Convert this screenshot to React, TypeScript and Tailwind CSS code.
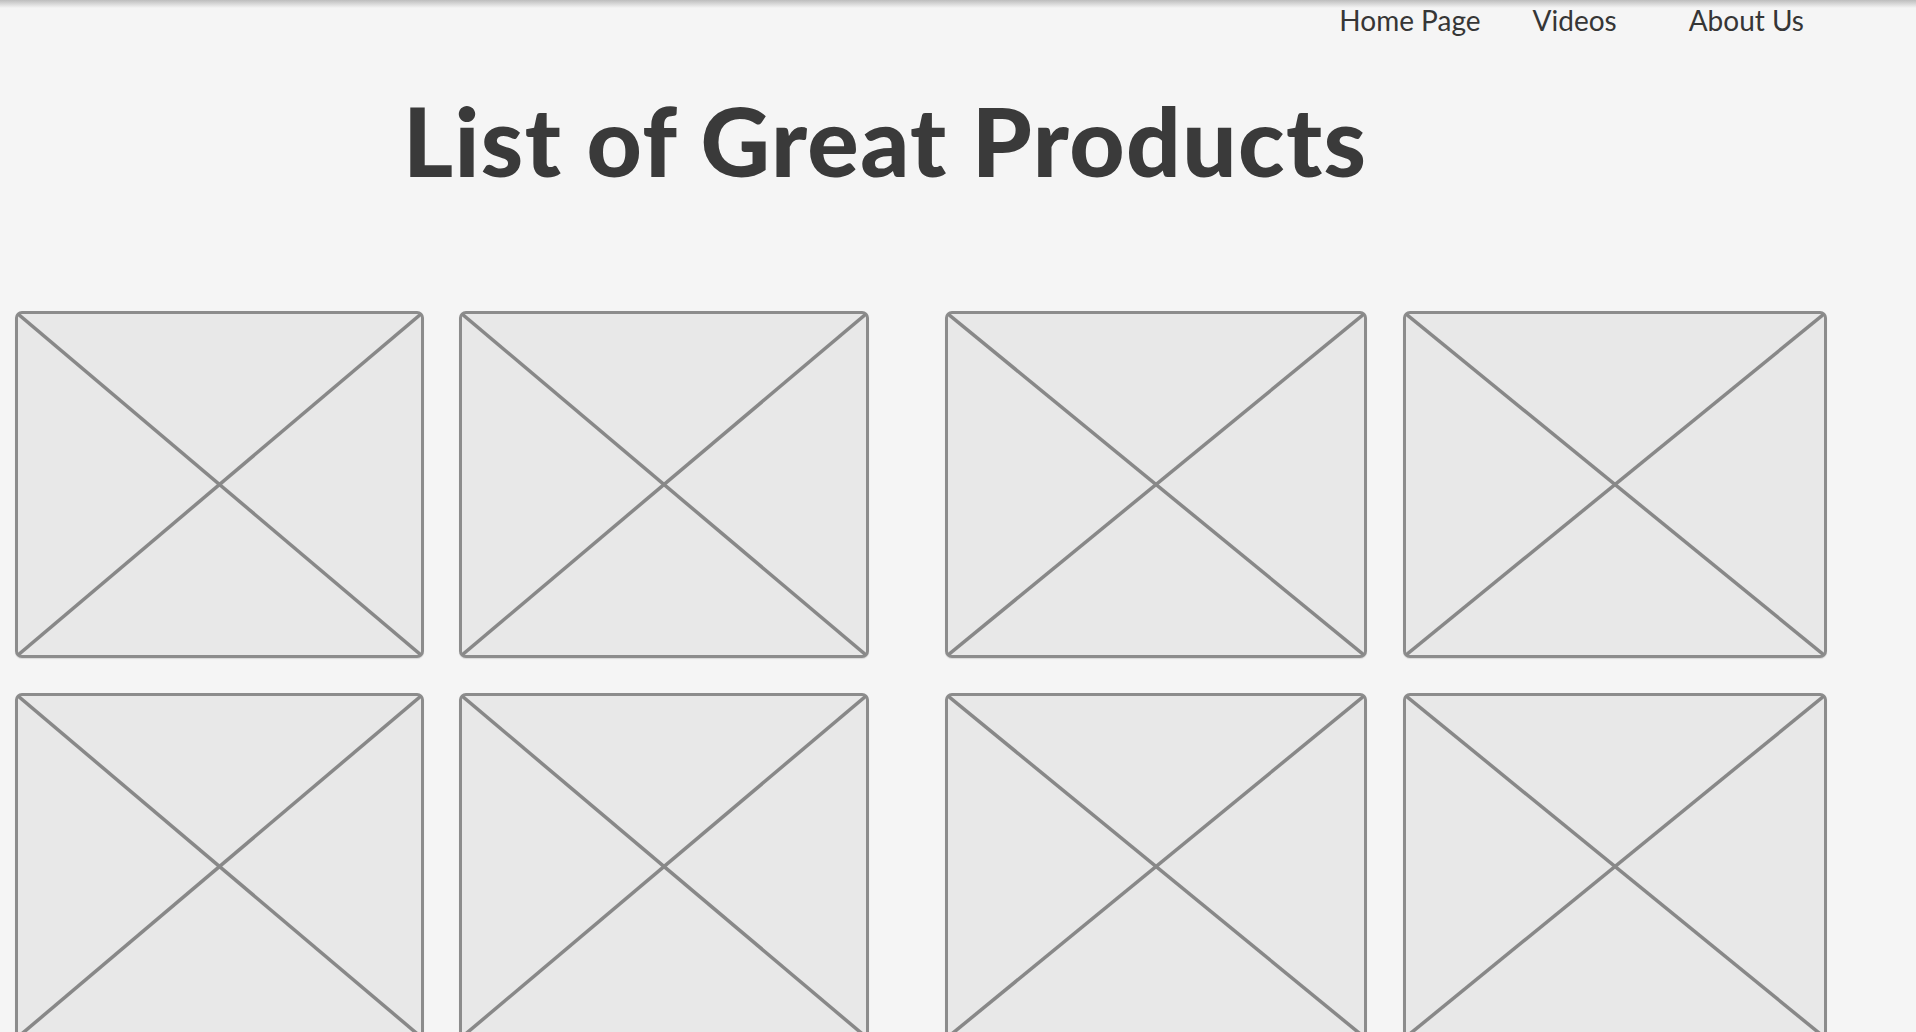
import React from "react";

const navItems = [
  { label: "Home Page", className: "" },
  { label: "Videos", className: "ml-[52px]" },
  { label: "About Us", className: "ml-[72px]" },
];

function Placeholder({ width }: { width: string }) {
  return (
    <div
      className={`relative h-[347px] ${width} rounded-[7px] border-[3px] border-[#8c8c8c] bg-[#e8e8e8] shadow-[0_1px_1px_rgba(0,0,0,0.12)]`}
    >
      <svg
        className="absolute inset-0 h-full w-full"
        viewBox="0 0 100 100"
        preserveAspectRatio="none"
      >
        <line x1="0" y1="0" x2="100" y2="100" stroke="#888888" strokeWidth="3.5" vectorEffect="non-scaling-stroke" />
        <line x1="100" y1="0" x2="0" y2="100" stroke="#888888" strokeWidth="3.5" vectorEffect="non-scaling-stroke" />
      </svg>
    </div>
  );
}

function ProductRow() {
  return (
    <div className="flex gap-[76px]">
      <div className="flex gap-[35px]">
        <Placeholder width="w-[409px]" />
        <Placeholder width="w-[410px]" />
      </div>
      <div className="flex gap-[36px]">
        <Placeholder width="w-[422px]" />
        <Placeholder width="w-[424px]" />
      </div>
    </div>
  );
}

export default function App() {
  return (
    <div className="relative h-screen overflow-hidden bg-[#f5f5f5] font-['Lato',sans-serif] text-[#363636]">
      {/* top edge shadow */}
      <div className="pointer-events-none absolute inset-x-0 top-0 h-[8px] bg-gradient-to-b from-[#bdbdbd] to-[#f5f5f5]/0" />

      {/* NAV */}
      <nav className="flex justify-end pr-[112px] pt-[6px]">
        {navItems.map((item) => (
          <a key={item.label} className={`text-[28px] leading-none ${item.className}`}>
            {item.label}
          </a>
        ))}
      </nav>

      {/* TITLE */}
      <h1 className="mt-[58px] pl-[403px] text-[96px] font-black leading-none tracking-[1.4px] text-[#3a3a3a]">
        List of Great Products
      </h1>

      {/* GRID */}
      <div className="mt-[123px] flex flex-col gap-[35px] pl-[15px]">
        <ProductRow />
        <ProductRow />
      </div>
    </div>
  );
}
